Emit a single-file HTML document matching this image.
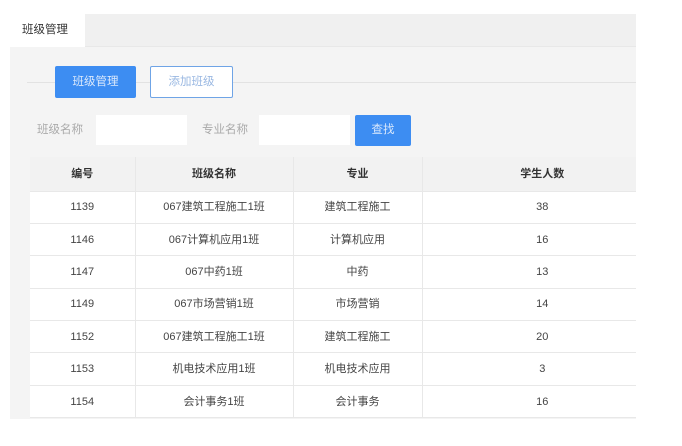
<!DOCTYPE html>
<html><head><meta charset="utf-8"><style>
*{margin:0;padding:0;box-sizing:border-box}
body{width:682px;height:446px;background:#fff;font-family:"Liberation Sans","Noto Sans CJK SC",sans-serif;font-size:12px;color:#333;position:relative;overflow:hidden}
.panel{position:absolute;left:10px;top:14px;width:626px;height:405px;background:#f4f4f4}
.tabbar{position:absolute;left:10px;top:14px;width:626px;height:33px;background:#f0f0f0;border-bottom:1px solid #e8e8e8}
.tab{position:absolute;left:10px;top:14px;width:75px;height:33px;background:#fff;line-height:32px;padding-left:12px;font-size:11.5px;color:#333}
.line{position:absolute;left:27px;top:82px;width:609px;height:1px;background:#e2e2e2}
.btn{position:absolute;height:32px;line-height:30px;text-align:center;font-size:11.5px;border-radius:2px}
.b1{left:55px;top:66px;width:81px;background:#3d8df2;color:#dbe9fc;border:1px solid #3d8df2}
.b2{left:150px;top:66px;width:83px;background:#fff;color:#9ab8e2;border:1px solid #6fa4e6}
.b3{left:355px;top:115px;width:56px;height:31px;background:#3d8df2;color:#dbe9fc;line-height:31px}
.lbl{position:absolute;top:115px;line-height:30px;color:#aaa;font-size:11.5px}
.inp{position:absolute;top:115px;height:30px;background:#fff}
.wrap{position:absolute;left:30px;top:157px;width:606px;height:262px;overflow:hidden}
table{width:632px;border-collapse:collapse;background:#fff;table-layout:fixed}
td,th{height:32.4px;line-height:14px;vertical-align:middle;text-align:center;border-bottom:1px solid #e8e8e8;border-right:1px solid #e8e8e8;font-size:11px;color:#444;font-weight:normal;padding:0}
th{background:#f2f2f2;font-weight:bold;color:#333;height:34px}
tr td:last-child,tr th:last-child{border-right:none}
</style></head><body>
<div class="panel"></div>
<div class="tabbar"></div>
<div class="tab">班级管理</div>
<div class="line"></div>
<div class="btn b1">班级管理</div>
<div class="btn b2">添加班级</div>
<div class="lbl" style="left:37px">班级名称</div>
<div class="inp" style="left:96px;width:91px"></div>
<div class="lbl" style="left:202px">专业名称</div>
<div class="inp" style="left:259px;width:91px"></div>
<div class="btn b3">查找</div>
<div class="wrap"><table>
<colgroup><col style="width:105px"><col style="width:158px"><col style="width:129px"><col></colgroup>
<tr><th>编号</th><th>班级名称</th><th>专业</th><th>学生人数</th></tr>
<tr><td>1139</td><td>067建筑工程施工1班</td><td>建筑工程施工</td><td>38</td></tr>
<tr><td>1146</td><td>067计算机应用1班</td><td>计算机应用</td><td>16</td></tr>
<tr><td>1147</td><td>067中药1班</td><td>中药</td><td>13</td></tr>
<tr><td>1149</td><td>067市场营销1班</td><td>市场营销</td><td>14</td></tr>
<tr><td>1152</td><td>067建筑工程施工1班</td><td>建筑工程施工</td><td>20</td></tr>
<tr><td>1153</td><td>机电技术应用1班</td><td>机电技术应用</td><td>3</td></tr>
<tr><td>1154</td><td>会计事务1班</td><td>会计事务</td><td>16</td></tr>
</table></div>
</body></html>
